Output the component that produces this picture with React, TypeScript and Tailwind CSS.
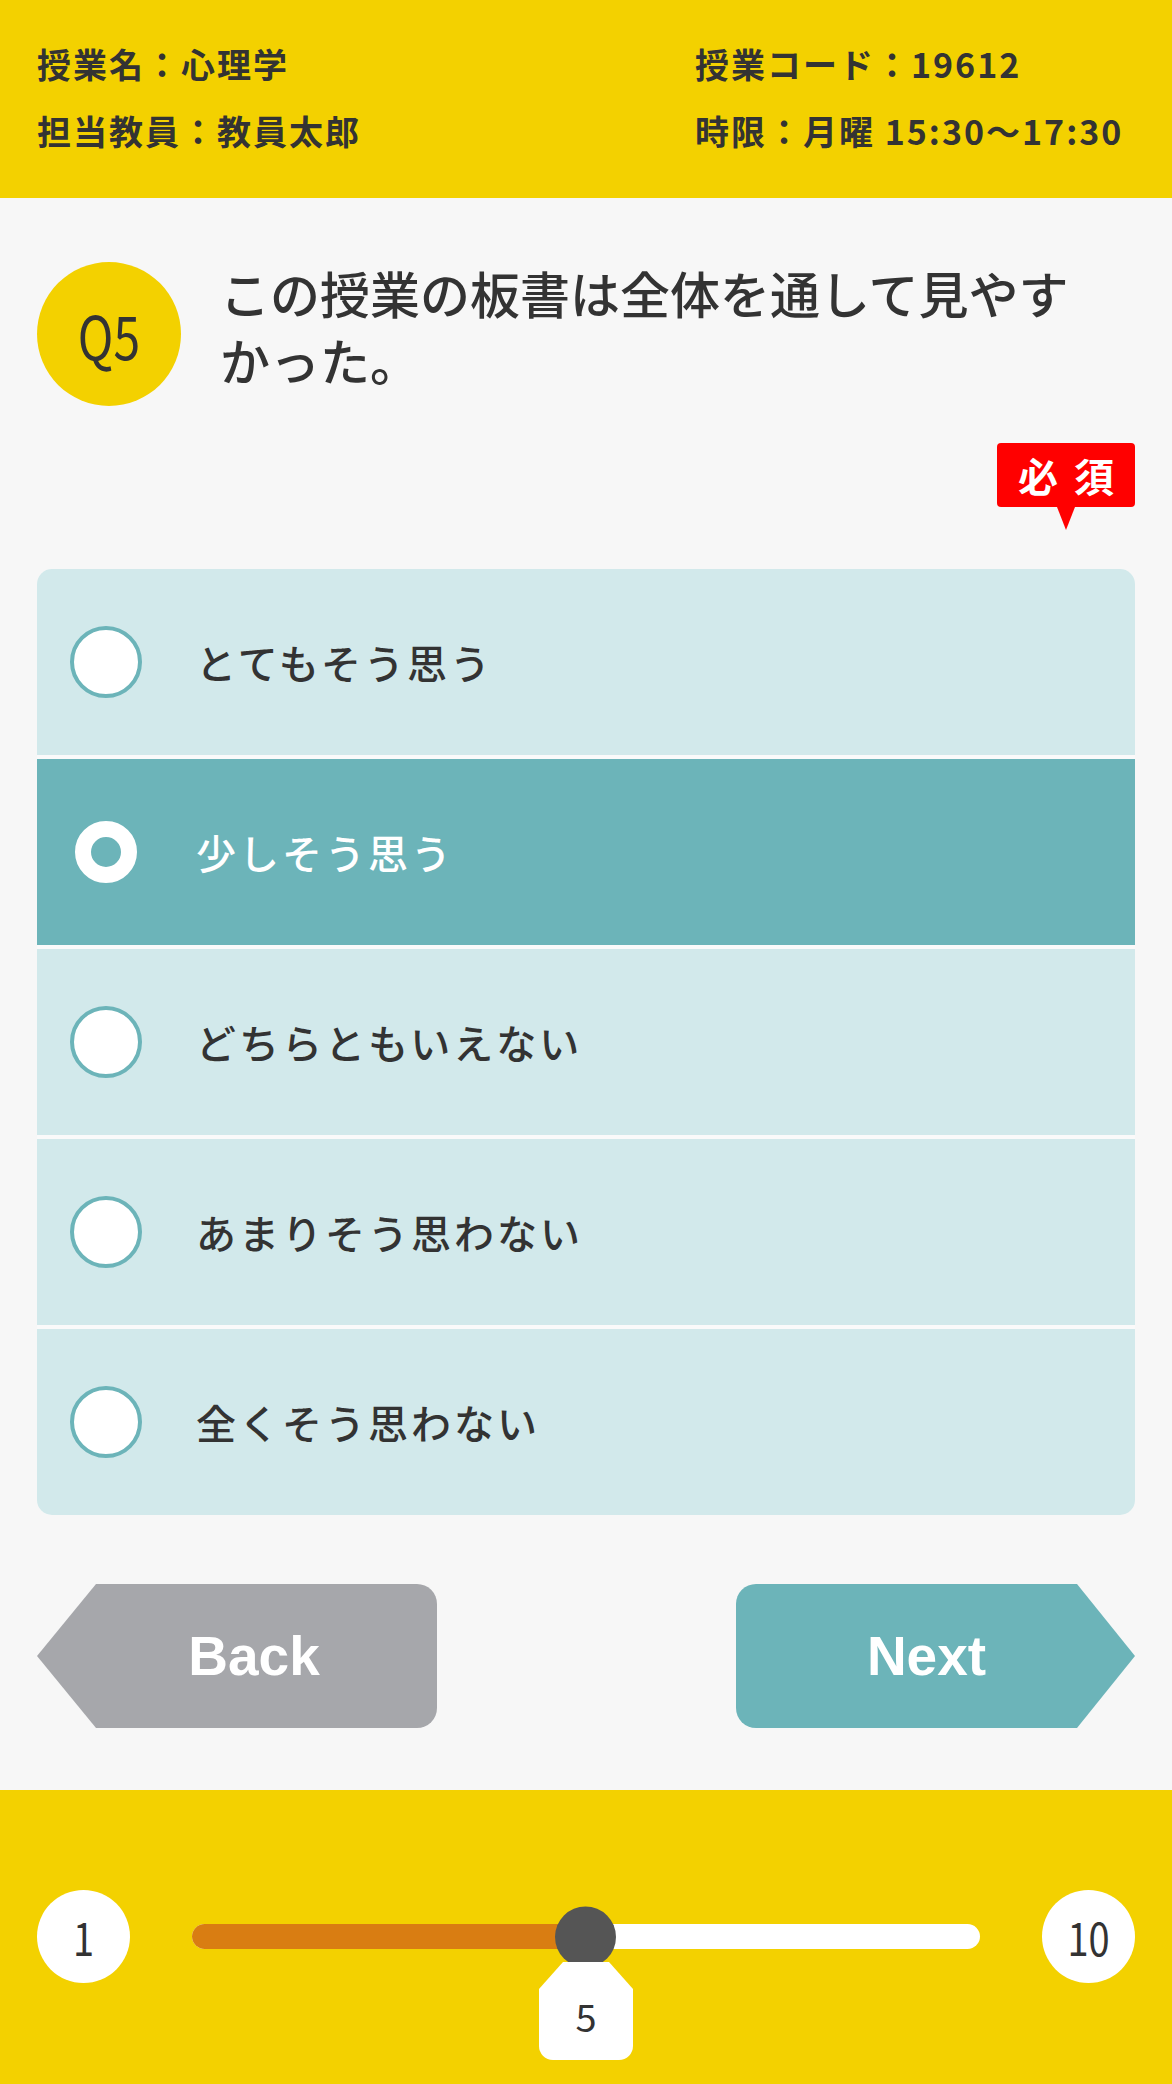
import React from "react";

const jp = { fontFamily: '"Noto Sans CJK JP", "Noto Sans", sans-serif' };

const options = [
  "とてもそう思う",
  "少しそう思う",
  "どちらともいえない",
  "あまりそう思わない",
  "全くそう思わない",
];

export default function App() {
  const selected = 1;

  return (
    <div className="w-[1172px] min-h-[2084px] bg-[#f7f7f7] flex flex-col text-[#333]" style={jp}>
      {/* Class info */}
      <header className="h-[198px] bg-[#f3d100] px-[37px] pt-[44px]">
        <div className="grid grid-cols-[658px_1fr] gap-y-[27px] text-[34px] leading-[40px] font-bold tracking-[2px] whitespace-nowrap">
          <p>授業名：心理学</p>
          <p>授業コード：19612</p>
          <p>担当教員：教員太郎</p>
          <p>時限：月曜 15:30～17:30</p>
        </div>
      </header>

      <main className="px-[37px] pt-[64px] pb-[62px]">
        {/* Question */}
        <div className="flex items-start gap-[39px]">
          <div className="w-[144px] h-[144px] shrink-0 rounded-full bg-[#f3d100] flex items-center justify-center">
            <span className="text-[48px] leading-none scale-y-[1.25]">Q5</span>
          </div>
          <p className="w-[870px] text-[50px] leading-[67px] font-medium -mt-[3px]">
            この授業の板書は全体を通して見やすかった。
          </p>
        </div>

        {/* Required badge */}
        <div className="flex justify-end mt-[37px]">
          <div className="relative w-[138px] h-[64px] bg-[#ff0000] rounded-[4px] flex items-center justify-center gap-[16px] text-white text-[40px] font-bold leading-none">
            <span>必</span>
            <span>須</span>
            <div className="absolute top-full left-1/2 -translate-x-1/2 w-0 h-0 border-l-[9px] border-r-[9px] border-t-[23px] border-l-transparent border-r-transparent border-t-[#ff0000]" />
          </div>
        </div>

        {/* Options */}
        <div className="mt-[62px] rounded-[15px] overflow-hidden flex flex-col gap-[4px] bg-[#fafafa]">
          {options.map((label, i) => {
            const on = i === selected;
            return (
              <div
                key={label}
                className={`h-[186px] flex items-center pl-[33px] ${on ? "bg-[#6cb4b9] text-white" : "bg-[#d2e9eb]"}`}
              >
                <div className="w-[72px] h-[72px] shrink-0 flex items-center justify-center">
                  {on ? (
                    <div className="w-[62px] h-[62px] rounded-full border-[16px] border-white bg-[#6cb4b9]" />
                  ) : (
                    <div className="w-[72px] h-[72px] rounded-full border-[4px] border-[#6cb4b9] bg-white" />
                  )}
                </div>
                <span className="ml-[54px] text-[40px] leading-[48px] font-medium tracking-[3px]">{label}</span>
              </div>
            );
          })}
        </div>

        {/* Navigation */}
        <div
          className="mt-[69px] flex justify-between text-white font-bold text-[55px]"
          style={{ fontFamily: '"Liberation Sans", Arial, sans-serif' }}
        >
          <button className="w-[400px] h-[144px] bg-[#a6a7ab] rounded-r-[20px] pl-[34px] flex items-center justify-center [clip-path:polygon(59px_0,100%_0,100%_100%,59px_100%,0_50%)]">
            Back
          </button>
          <button className="w-[399px] h-[144px] bg-[#6cb4b9] rounded-l-[20px] pr-[18px] flex items-center justify-center [clip-path:polygon(0_0,calc(100%-58px)_0,100%_50%,calc(100%-58px)_100%,0_100%)]">
            Next
          </button>
        </div>
      </main>

      {/* Progress */}
      <footer className="h-[294px] bg-[#f3d100] px-[37px] pt-[100px]">
        <div className="flex items-center">
          <div className="w-[93px] h-[93px] shrink-0 rounded-full bg-white flex items-center justify-center">
            <span className="text-[38px] leading-none scale-y-[1.2]">1</span>
          </div>
          <div className="relative flex-1 mx-[62px] h-[25px] rounded-full bg-white">
            <div className="absolute left-0 top-0 h-full w-[394px] rounded-full bg-[#d97d12]" />
            <div className="absolute left-[363px] top-1/2 -translate-y-1/2 w-[61px] h-[61px] rounded-full bg-[#555]" />
            <div className="absolute left-[347px] top-[38px] w-[94px] h-[98px] bg-white rounded-b-[14px] flex items-center justify-center pt-[10px] [clip-path:polygon(24px_0,70px_0,100%_27px,100%_100%,0_100%,0_27px)]">
              <span className="text-[38px] leading-none">5</span>
            </div>
          </div>
          <div className="w-[93px] h-[93px] shrink-0 rounded-full bg-white flex items-center justify-center">
            <span className="text-[38px] leading-none scale-y-[1.2]">10</span>
          </div>
        </div>
      </footer>
    </div>
  );
}
